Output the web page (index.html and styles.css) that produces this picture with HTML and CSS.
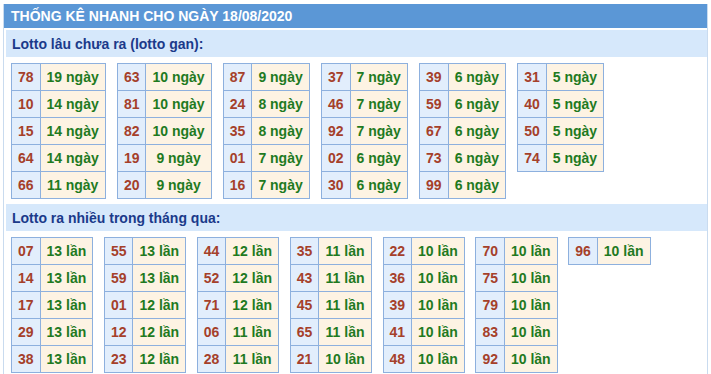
FILE: index.html
```html
<!DOCTYPE html>
<html lang="vi">
<head>
<meta charset="utf-8">
<title>Thống kê nhanh</title>
<link rel="stylesheet" href="styles.css">
</head>
<body>
<div class="frame">
  <div class="head">THỐNG KÊ NHANH CHO NGÀY 18/08/2020</div>
  <div class="sub">Lotto lâu chưa ra (lotto gan):</div>
  <div class="tables gan">
    <table><tr><td class="n">78</td><td class="v">19 ngày</td></tr><tr><td class="n">10</td><td class="v">14 ngày</td></tr><tr><td class="n">15</td><td class="v">14 ngày</td></tr><tr><td class="n">64</td><td class="v">14 ngày</td></tr><tr><td class="n">66</td><td class="v">11 ngày</td></tr></table>
    <table><tr><td class="n">63</td><td class="v">10 ngày</td></tr><tr><td class="n">81</td><td class="v">10 ngày</td></tr><tr><td class="n">82</td><td class="v">10 ngày</td></tr><tr><td class="n">19</td><td class="v">9 ngày</td></tr><tr><td class="n">20</td><td class="v">9 ngày</td></tr></table>
    <table><tr><td class="n">87</td><td class="v">9 ngày</td></tr><tr><td class="n">24</td><td class="v">8 ngày</td></tr><tr><td class="n">35</td><td class="v">8 ngày</td></tr><tr><td class="n">01</td><td class="v">7 ngày</td></tr><tr><td class="n">16</td><td class="v">7 ngày</td></tr></table>
    <table><tr><td class="n">37</td><td class="v">7 ngày</td></tr><tr><td class="n">46</td><td class="v">7 ngày</td></tr><tr><td class="n">92</td><td class="v">7 ngày</td></tr><tr><td class="n">02</td><td class="v">6 ngày</td></tr><tr><td class="n">30</td><td class="v">6 ngày</td></tr></table>
    <table><tr><td class="n">39</td><td class="v">6 ngày</td></tr><tr><td class="n">59</td><td class="v">6 ngày</td></tr><tr><td class="n">67</td><td class="v">6 ngày</td></tr><tr><td class="n">73</td><td class="v">6 ngày</td></tr><tr><td class="n">99</td><td class="v">6 ngày</td></tr></table>
    <table><tr><td class="n">31</td><td class="v">5 ngày</td></tr><tr><td class="n">40</td><td class="v">5 ngày</td></tr><tr><td class="n">50</td><td class="v">5 ngày</td></tr><tr><td class="n">74</td><td class="v">5 ngày</td></tr></table>
  </div>
  <div class="sub">Lotto ra nhiều trong tháng qua:</div>
  <div class="tables nhieu">
    <table><tr><td class="n">07</td><td class="v">13 lần</td></tr><tr><td class="n">14</td><td class="v">13 lần</td></tr><tr><td class="n">17</td><td class="v">13 lần</td></tr><tr><td class="n">29</td><td class="v">13 lần</td></tr><tr><td class="n">38</td><td class="v">13 lần</td></tr></table>
    <table><tr><td class="n">55</td><td class="v">13 lần</td></tr><tr><td class="n">59</td><td class="v">13 lần</td></tr><tr><td class="n">01</td><td class="v">12 lần</td></tr><tr><td class="n">12</td><td class="v">12 lần</td></tr><tr><td class="n">23</td><td class="v">12 lần</td></tr></table>
    <table><tr><td class="n">44</td><td class="v">12 lần</td></tr><tr><td class="n">52</td><td class="v">12 lần</td></tr><tr><td class="n">71</td><td class="v">12 lần</td></tr><tr><td class="n">06</td><td class="v">11 lần</td></tr><tr><td class="n">28</td><td class="v">11 lần</td></tr></table>
    <table><tr><td class="n">35</td><td class="v">11 lần</td></tr><tr><td class="n">43</td><td class="v">11 lần</td></tr><tr><td class="n">45</td><td class="v">11 lần</td></tr><tr><td class="n">65</td><td class="v">11 lần</td></tr><tr><td class="n">21</td><td class="v">10 lần</td></tr></table>
    <table><tr><td class="n">22</td><td class="v">10 lần</td></tr><tr><td class="n">36</td><td class="v">10 lần</td></tr><tr><td class="n">39</td><td class="v">10 lần</td></tr><tr><td class="n">41</td><td class="v">10 lần</td></tr><tr><td class="n">48</td><td class="v">10 lần</td></tr></table>
    <table><tr><td class="n">70</td><td class="v">10 lần</td></tr><tr><td class="n">75</td><td class="v">10 lần</td></tr><tr><td class="n">79</td><td class="v">10 lần</td></tr><tr><td class="n">83</td><td class="v">10 lần</td></tr><tr><td class="n">92</td><td class="v">10 lần</td></tr></table>
    <table><tr><td class="n">96</td><td class="v">10 lần</td></tr></table>
  </div>
</div>
</body>
</html>
```

FILE: styles.css
```css
html, body {
  margin: 0;
  padding: 0;
  background: #ffffff;
}
body {
  font-family: "Liberation Sans", Arial, sans-serif;
  font-size: 14px;
  font-weight: bold;
}
.frame {
  margin: 4px 3px 0 3px;
  border-left: 1px solid #c9dbef;
  border-right: 1px solid #c9dbef;
  min-height: 380px;
}
.head {
  background: #5b97d6;
  color: #ffffff;
  height: 24px;
  line-height: 25px;
  padding-left: 7px;
}
.sub {
  background: #d6e8fb;
  color: #1b3a8a;
  height: 27px;
  line-height: 28px;
  margin: 2px 0 0 2px;
  padding-left: 6px;
}
.frame .tables + .sub {
  margin-top: 0;
}
.tables {
  display: flex;
  flex-wrap: wrap;
  align-items: flex-start;
  padding: 6px 0 5px 7px;
}
.tables.gan {
  gap: 11.2px;
}
.tables.nhieu {
  gap: 10.6px;
}
table {
  border-collapse: collapse;
}
td {
  border: 1px solid #8db0de;
  padding: 0 6px;
  height: 26px;
  line-height: 26px;
  text-align: center;
  white-space: nowrap;
}
td.n {
  background: #e2eefc;
  color: #a5402a;
}
td.v {
  background: #fdf3e3;
  color: #1f7a1f;
}
```
